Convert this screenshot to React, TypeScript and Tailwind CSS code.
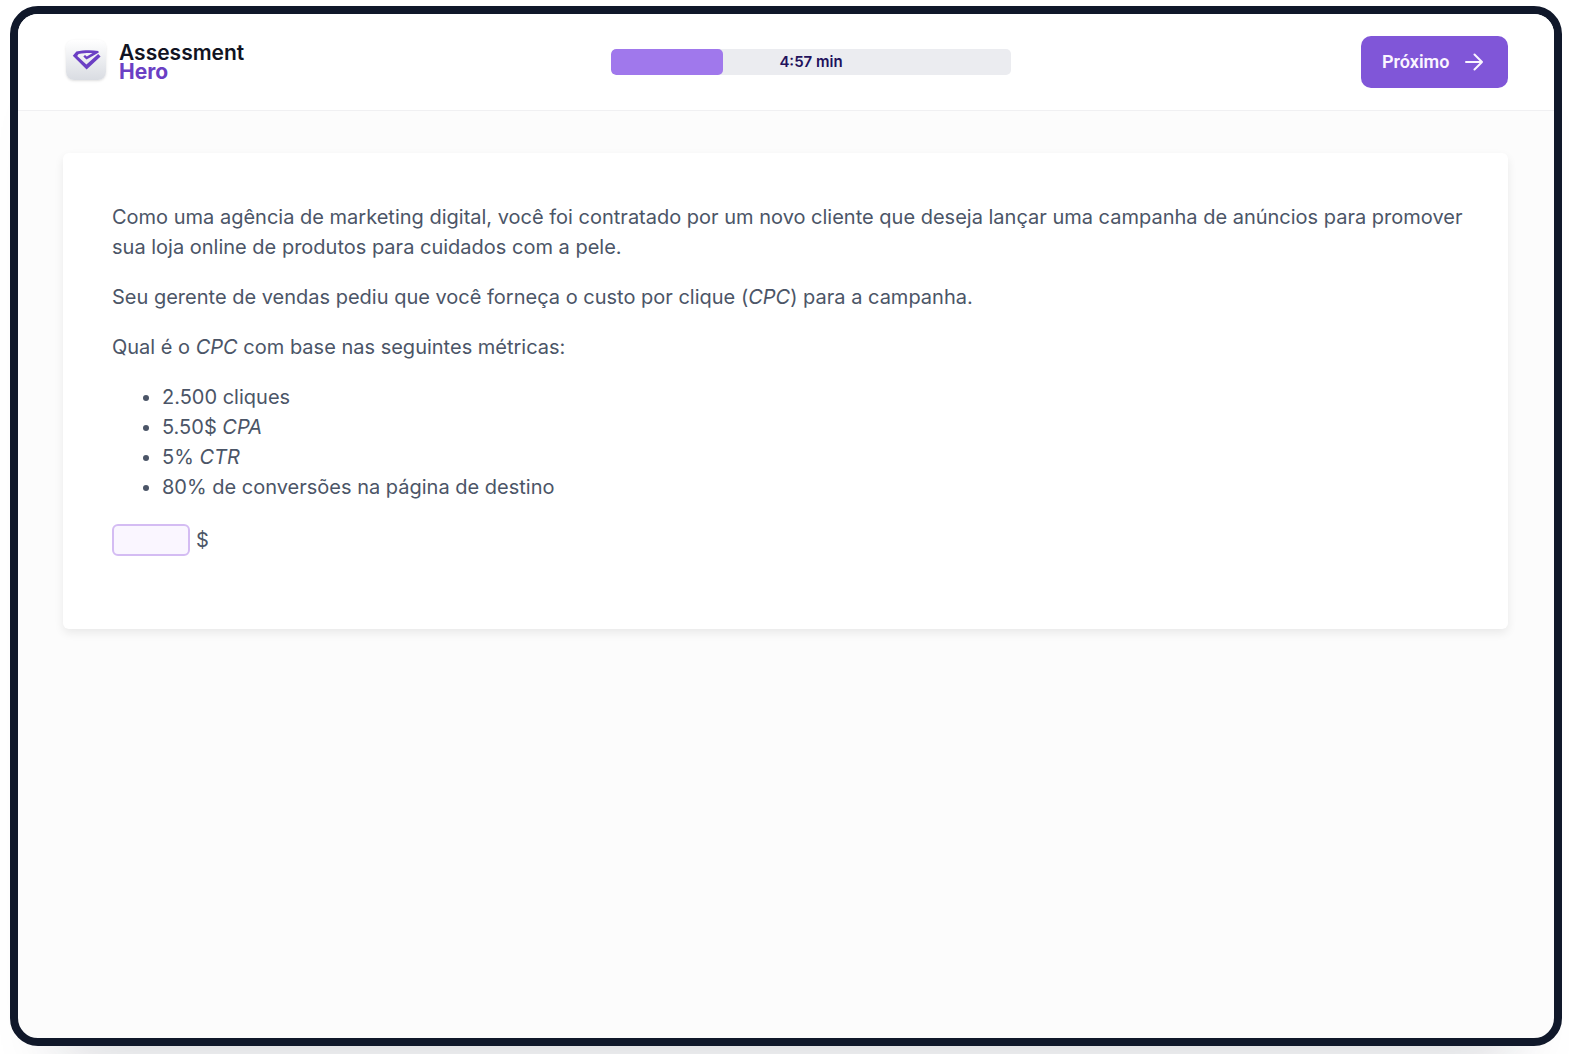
import { useState } from "react";

function Logo() {
  return (
    <a href="#" className="flex w-[198px] items-start gap-[13px] pb-1 pl-[3px]" aria-label="Assessment Hero">
      <span className="flex h-10 w-10 justify-center rounded-lg bg-linear-to-b from-white to-[#d9dce2] pt-[10px] shadow-sm">
        <svg width="29" height="20" viewBox="0 0 29 20" fill="#6b3fc4" aria-hidden="true">
          <path d="M26.3 0.9 C19 -0.2 11 0 4.4 1.6 L0.8 5.8 L14.6 19.4 L28.6 6.4 L26.2 4.1 L14.4 14.6 L5.2 5.9 L6.6 4.1 C11.6 3.1 16.6 2.8 20.6 3.1 L14.8 6.6 L13 4.9 L11.3 6.6 L14.5 9.6 L26.8 2.6 Z" />
        </svg>
      </span>
      <span className="flex flex-col pt-[3px] text-[21px] leading-[19px]">
        <span className="font-semibold text-[#111322]">Assessment</span>
        <span className="font-bold text-[#6b3fc4]">Hero</span>
      </span>
    </a>
  );
}

function TimeBar({ percent, label }: { percent: number; label: string }) {
  return (
    <div
      role="progressbar"
      aria-label="Tempo restante"
      aria-valuenow={percent}
      aria-valuemin={0}
      aria-valuemax={100}
      className="relative h-[26px] w-[400px] overflow-hidden rounded-[5px] bg-[#ebecf0]"
    >
      <div className="h-full rounded-[5px] bg-[#a078ec]" style={{ width: `${percent}%` }} />
      <span className="absolute inset-0 flex items-center justify-center text-[15px] font-semibold text-[#22125c]">
        {label}
      </span>
    </div>
  );
}

export default function App() {
  const [answer, setAnswer] = useState("");

  return (
    <div className="min-h-screen overflow-hidden bg-white pt-[6px] pr-[7px] pb-2 pl-[10px] font-['Inter',sans-serif]">
      <div className="flex min-h-[calc(100vh-14px)] flex-col overflow-hidden rounded-[28px] border-8 border-[#10182a] bg-[#fcfcfc] shadow-[0_60px_60px_-50px_rgba(16,24,42,0.18)]">
        <header className="flex h-[97px] items-center justify-between border-b border-[#f0f0f2] bg-white pr-[46px] pl-[45px]">
          <Logo />
          <TimeBar percent={28} label="4:57 min" />
          <button
            type="button"
            className="flex h-[52px] w-[147px] items-center justify-between rounded-[10px] bg-[#8056d8] pr-[25px] pl-[21px] font-['Roboto',sans-serif] text-lg font-semibold text-[#faf5ff]"
          >
            Próximo
            <svg width="18" height="18" viewBox="0 0 18 18" fill="none" stroke="currentColor" strokeWidth="2" strokeLinecap="round" strokeLinejoin="round" aria-hidden="true">
              <path d="M1 9H17M9.5 1.5L17 9L9.5 16.5" />
            </svg>
          </button>
        </header>
        <main className="pt-[42px] pr-[46px] pl-[45px]">
          <section className="flex flex-col gap-5 rounded-md bg-white pt-[49px] pr-10 pb-[73px] pl-[49px] text-xl leading-[30px] text-[#4b5567] shadow-[0_4px_10px_0_rgba(0,0,0,0.08)]">
            <p>
              Como uma agência de marketing digital, você foi contratado por um novo cliente que deseja lançar uma
              campanha de anúncios para promover sua loja online de produtos para cuidados com a pele.
            </p>
            <p>
              Seu gerente de vendas pediu que você forneça o custo por clique (<em>CPC</em>) para a campanha.
            </p>
            <p>
              Qual é o <em>CPC</em> com base nas seguintes métricas:
            </p>
            <ul className="list-disc pl-[50px]">
              <li>2.500 cliques</li>
              <li>
                5.50$ <em>CPA</em>
              </li>
              <li>
                5% <em>CTR</em>
              </li>
              <li>80% de conversões na página de destino</li>
            </ul>
            <label className="flex items-center gap-[6px] pt-[2px]">
              <input
                type="text"
                aria-label="Resposta"
                value={answer}
                onChange={(e) => setAnswer(e.target.value)}
                className="h-8 w-[78px] rounded-md border-2 border-[#d4bcf3] bg-[#faf6ff] px-2"
              />
              $
            </label>
          </section>
        </main>
      </div>
    </div>
  );
}
